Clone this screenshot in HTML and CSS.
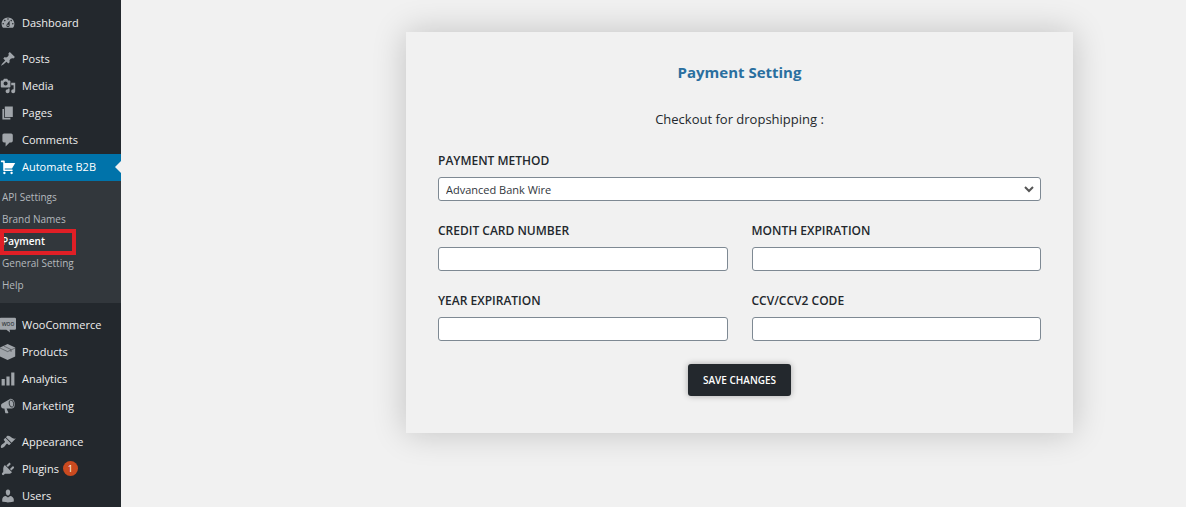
FILE: index.html
```html
<!DOCTYPE html>
<html lang="en">
<head>
<meta charset="utf-8">
<title>Payment Setting</title>
<meta name="viewport" content="width=device-width, initial-scale=1">
<link rel="stylesheet" href="styles.css">
</head>
<body>
<div class="app">
  <nav class="sidebar" aria-label="Main menu">
    <ul class="menu">
      <li><a class="menu-link" href="#"><svg class="icon" viewBox="0 0 20 20"><path d="M3.76 16h12.48c1.1-1.37 1.76-3.11 1.76-5 0-4.42-3.58-8-8-8s-8 3.58-8 8c0 1.89.66 3.63 1.76 5zM10 4c.55 0 1 .45 1 1s-.45 1-1 1-1-.45-1-1 .45-1 1-1zM6 6c.55 0 1 .45 1 1s-.45 1-1 1-1-.45-1-1 .45-1 1-1zm8 0c.55 0 1 .45 1 1s-.45 1-1 1-1-.45-1-1 .45-1 1-1zm-5.370 5.550L12 7v6c0 1.100-.9 2-2 2s-2-.9-2-2c0-.57.24-1.080.63-1.450zM4 10c.55 0 1 .45 1 1s-.45 1-1 1-1-.45-1-1 .45-1 1-1zm12 0c.55 0 1 .45 1 1s-.45 1-1 1-1-.45-1-1 .45-1 1-1zm-5 3c0-.55-.45-1-1-1s-1 .45-1 1 .45 1 1 1 1-.45 1-1z"/></svg>Dashboard</a></li>
      <li class="group-start"><a class="menu-link" href="#"><svg class="icon" viewBox="0 0 20 20"><path d="M10.44 3.02l1.82-1.82 6.36 6.35-1.83 1.82c-1.05-.68-2.48-.57-3.41.36l-.75.75c-.92.93-1.04 2.35-.35 3.41l-1.83 1.82-2.41-2.41-2.8 2.79c-.42.42-3.38 2.71-3.8 2.29s1.86-3.39 2.28-3.81l2.79-2.79L4.1 9.36l1.83-1.82c1.05.69 2.48.57 3.4-.36l.75-.75c.93-.92 1.05-2.35.36-3.41z"/></svg>Posts</a></li>
      <li><a class="menu-link" href="#"><svg class="icon" viewBox="0 0 20 20"><path d="M13 11V4c0-.55-.45-1-1-1h-1.67L9 1H5L3.67 3H2c-.55 0-1 .45-1 1v7c0 .55.45 1 1 1h10c.55 0 1-.45 1-1zM7 4.5c1.38 0 2.5 1.12 2.5 2.5S8.38 9.5 7 9.5 4.5 8.38 4.5 7 5.62 4.5 7 4.5zM14 6h5v10.5c0 1.38-1.12 2.5-2.5 2.5S14 17.88 14 16.5s1.12-2.5 2.5-2.5c.17 0 .34.02.5.05V9h-3V6zm-4 8.05V13h2v3.5c0 1.38-1.12 2.5-2.5 2.5S7 17.88 7 16.5 8.12 14 9.5 14c.17 0 .34.02.5.05z"/></svg>Media</a></li>
      <li><a class="menu-link" href="#"><svg class="icon" viewBox="0 0 20 20"><path d="M6 15V2h10v13H6zm-1 1h8v2H3V5h2v11z"/></svg>Pages</a></li>
      <li><a class="menu-link" href="#"><svg class="icon" viewBox="0 0 20 20"><path d="M5 2h9c1.1 0 2 .9 2 2v7c0 1.1-.9 2-2 2h-2l-5 5v-5H5c-1.1 0-2-.9-2-2V4c0-1.1.9-2 2-2z"/></svg>Comments</a></li>
      <li>
        <a class="menu-link current" href="#"><svg class="icon" viewBox="0 0 20 20"><path d="M6 13h9c.55 0 1 .45 1 1s-.45 1-1 1H5c-.55 0-1-.45-1-1V4H2c-.55 0-1-.45-1-1s.45-1 1-1h3c.55 0 1 .45 1 1v2h13l-4 7H6v1zm-.5 3c.83 0 1.5.67 1.5 1.5S6.33 19 5.5 19 4 18.33 4 17.5 4.67 16 5.5 16zm9 0c.83 0 1.5.67 1.5 1.5s-.67 1.5-1.5 1.5-1.5-.67-1.5-1.5.67-1.5 1.5-1.5z"/></svg>Automate B2B</a>
        <ul class="submenu">
          <li><a class="submenu-link" href="#">API Settings</a></li>
          <li><a class="submenu-link" href="#">Brand Names</a></li>
          <li class="highlighted"><a class="submenu-link active" href="#" aria-current="page">Payment</a></li>
          <li><a class="submenu-link" href="#">General Setting</a></li>
          <li><a class="submenu-link" href="#">Help</a></li>
        </ul>
      </li>
      <li class="group-start"><a class="menu-link" href="#"><svg class="icon" viewBox="0 0 20 20"><path d="M1 1h17.500q1.500 0 1.500 1.500v12q0 1.500-1.500 1.500h-6.500l.5 3.500-4.500-3.500h-7q-1.500 0-1.500-1.500v-12q0-1.500 1.500-1.500z"/><text class="woo-text" x="10" y="11" text-anchor="middle">woo</text></svg>WooCommerce</a></li>
      <li><a class="menu-link" href="#"><svg class="icon" viewBox="0 0 20 20"><path d="M9.500 0l9.500 4.500v11l-9.500 4.500-9.500-4.500v-11z"/><path class="cut thin" d="M0 5l9.500 4.500 9.500-4.500M4.800 2.500l9 4.500v3"/></svg>Products</a></li>
      <li><a class="menu-link" href="#"><svg class="icon" viewBox="0 0 20 20"><path d="M18 18V2h-4v16h4zm-6 0V7H8v11h4zm-6 0v-8H2v8h4z"/></svg>Analytics</a></li>
      <li><a class="menu-link" href="#"><svg class="icon" viewBox="0 0 20 20"><path d="M2.700 6.900L12.500 1.200C15.500.2 18.200 3.200 18.500 7.500c.2 3.500-1.200 5.500-3.500 5.500H8.200l2.300 5.500-.5.500H7l-.5-.5-1-5.500H4c-1.300 0-2.300-1-2.600-2.500-.3-1.600.2-3.100 1.300-3.600z"/><ellipse class="cut" cx="14.300" cy="7" rx="2.800" ry="4.500" transform="rotate(-12 14.300 7)"/></svg>Marketing</a></li>
      <li class="group-start"><a class="menu-link" href="#"><svg class="icon" viewBox="0 0 20 20"><path d="M14.480 11.060L7.410 3.990l1.500-1.500c.5-.56 2.3-.47 3.51.32 1.21.8 1.43 1.28 2.91 2.1 1.18.64 2.45 1.26 4.45.85zm-.71.71L6.700 4.700 4.930 6.470c-.39.39-.39 1.020 0 1.410l1.060 1.060c.39.39.39 1.030 0 1.420-.6.6-1.430 1.110-2.210 1.690-.35.26-.7.53-1.010.84C1.430 14.230.4 16.080 1.400 17.070c.99 1 2.840-.03 4.180-1.360.31-.31.58-.66.85-1.020.57-.78 1.080-1.610 1.690-2.210.39-.39 1.020-.39 1.410 0l1.060 1.060c.39.39 1.020.39 1.410 0z"/></svg>Appearance</a></li>
      <li><a class="menu-link" href="#"><svg class="icon" viewBox="0 0 20 20"><path d="M13.110 4.360L9.870 7.600 8 5.730l3.240-3.240c.35-.34 1.050-.2 1.560.32.52.51.66 1.210.31 1.550zm-8 1.770l.91-1.120 9.010 9.010-1.190.84c-.71.71-2.630 1.160-3.820 1.160H6.140L4.900 17.260c-.59.59-1.540.59-2.120 0-.59-.58-.59-1.530 0-2.120l1.240-1.240v-3.880c0-1.130.4-3.190 1.090-3.890zm7.260 3.970l3.240-3.240c.34-.35 1.040-.21 1.550.31.52.51.66 1.210.31 1.550l-3.240 3.250z"/></svg>Plugins<span class="badge">1</span></a></li>
      <li><a class="menu-link" href="#"><svg class="icon" viewBox="0 0 20 20"><path d="M10 9.250c-2.270 0-2.730-3.440-2.730-3.440C7 4.020 7.820 2 9.970 2c2.160 0 2.980 2.020 2.710 3.810 0 0-.41 3.440-2.680 3.440zm0 2.570L12.720 10c2.390 0 4.520 2.330 4.520 4.530v2.490s-3.650 1.130-7.240 1.130c-3.650 0-7.240-1.130-7.240-1.130v-2.490c0-2.250 1.940-4.480 4.470-4.480z"/></svg>Users</a></li>
    </ul>
  </nav>
  <main class="content">
    <form class="card">
      <h1 class="title">Payment Setting</h1>
      <p class="subtitle">Checkout for dropshipping :</p>
      <div class="fields">
        <div class="field wide">
          <label class="label" for="method">PAYMENT METHOD</label>
          <div class="select-wrap">
            <select class="control" id="method"><option>Advanced Bank Wire</option></select>
            <svg class="chevron" viewBox="0 0 10 10"><path d="M1 3l4 4 4-4"/></svg>
          </div>
        </div>
        <div class="field"><label class="label" for="card">CREDIT CARD NUMBER</label><input class="control" id="card" type="text"></div>
        <div class="field"><label class="label" for="month">MONTH EXPIRATION</label><input class="control" id="month" type="text"></div>
        <div class="field"><label class="label" for="year">YEAR EXPIRATION</label><input class="control" id="year" type="text"></div>
        <div class="field"><label class="label" for="ccv">CCV/CCV2 CODE</label><input class="control" id="ccv" type="text"></div>
      </div>
      <button class="save" type="submit">SAVE CHANGES</button>
    </form>
  </main>
</div>
</body>
</html>
```
FILE: styles.css
```css
*,
*::after { box-sizing: border-box; }

body {
  margin: 0;
  background: #f1f1f1;
  color: #23282d;
  font-family: "Open Sans", "Noto Sans", sans-serif;
  font-size: 11px;
}

.app {
  display: flex;
  height: 100vh;
  overflow: hidden;
  border-bottom: 1px solid #fff;
}

.sidebar {
  flex: 0 0 121px;
  padding-top: 10px;
  background: #23282d;
  overflow: hidden;
}

.menu,
.submenu {
  margin: 0;
  padding: 0;
  list-style: none;
}

.group-start { margin-top: 9px; }

.menu-link {
  display: flex;
  align-items: center;
  gap: 6px;
  height: 27px;
  padding-bottom: 2px;
  color: #eee;
  text-decoration: none;
  white-space: nowrap;
}

.icon {
  flex: none;
  width: 16px;
  height: 16px;
  fill: #a0a5aa;
}

.icon .cut {
  fill: none;
  stroke: #23282d;
  stroke-width: 1;
}

.icon .thin { stroke-opacity: 0.6; }

.icon .woo-text {
  fill: #23282d;
  font-size: 8px;
}

.current {
  position: relative;
  background: #0073aa;
  color: #fff;
}

.current .icon { fill: #fff; }

.current::after {
  content: "";
  position: absolute;
  right: 0;
  top: 7px;
  border: 6px solid transparent;
  border-left-width: 0;
  border-right-color: #f1f1f1;
}

.submenu {
  padding: 5px 0 7px;
  background: #32373c;
}

.submenu-link {
  display: block;
  padding-left: 2px;
  color: #b4b9be;
  font-size: 10px;
  line-height: 22px;
  text-decoration: none;
}

.submenu-link.active {
  color: #fff;
  font-weight: 600;
}

.highlighted { position: relative; }

.highlighted::after {
  content: "";
  position: absolute;
  top: -1px;
  left: 0;
  width: 76px;
  height: 26px;
  border: 4px solid #e01f26;
  pointer-events: none;
}

.badge {
  width: 15px;
  height: 15px;
  margin-left: -2px;
  border-radius: 50%;
  background: #ca4a1f;
  color: #fff;
  font-size: 9px;
  line-height: 15px;
  text-align: center;
}

.content {
  flex: 1;
  min-width: 0;
  padding: 32px 113px 0 285px;
}

.card {
  display: flex;
  flex-direction: column;
  align-items: center;
  padding: 29px 32px 37px;
  background: #f1f1f1;
  box-shadow: 0 0 32px rgba(0, 0, 0, 0.2);
}

.title {
  margin: 0;
  color: #2a6f9f;
  font-size: 15px;
  font-weight: 700;
  line-height: 22px;
}

.subtitle {
  margin: 25px 0 21px;
  font-size: 13px;
  font-weight: 500;
  line-height: 22px;
}

.fields {
  display: grid;
  grid-template-columns: 1fr 1fr;
  gap: 20px 24px;
  width: 100%;
}

.field {
  display: flex;
  flex-direction: column;
  gap: 6px;
}

.wide { grid-column: 1 / -1; }

.label {
  font-size: 12px;
  font-weight: 600;
  line-height: 20px;
}

.control {
  display: block;
  width: 100%;
  height: 24px;
  padding: 0 7px;
  border: 1px solid #7e8993;
  border-radius: 3px;
  background: #fff;
  color: #32373c;
  font-family: inherit;
  font-size: 11px;
  appearance: none;
}

.select-wrap { position: relative; }

.chevron {
  position: absolute;
  top: 7px;
  right: 7px;
  width: 10px;
  height: 10px;
  fill: none;
  stroke: #555;
  stroke-width: 2;
  pointer-events: none;
}

.save {
  height: 32px;
  margin-top: 23px;
  padding: 0 15px;
  border: 0;
  border-radius: 3px;
  background: #23282d;
  box-shadow: 0 0 6px rgba(0, 0, 0, 0.3);
  color: #fff;
  font-family: inherit;
  font-size: 10px;
  font-weight: 600;
}
```
